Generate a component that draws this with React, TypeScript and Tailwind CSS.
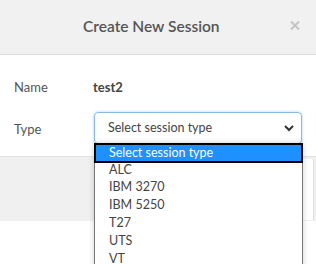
import React from "react";

export default function App() {
  const options = ["ALC", "IBM 3270", "IBM 5250", "T27", "UTS", "VT"];
  return (
    <div
      className="relative w-[316px] h-[264px] overflow-hidden bg-white"
      style={{ fontFamily: "Lato, 'Open Sans', sans-serif" }}
    >
      <div className="relative h-[55px] bg-[#f1f1f1] border-b border-[#dedede] flex items-center pl-[83px]">
        <span className="text-[15.5px] font-semibold text-[#555] mt-[-1px]">Create New Session</span>
        <svg
          className="absolute left-[290px] top-[21px]"
          width="10"
          height="9"
          viewBox="0 0 10 9"
        >
          <path d="M1 0.5 L9 8.5 M9 0.5 L1 8.5" stroke="#c4c4c4" strokeWidth="2" />
        </svg>
      </div>
      <div className="h-[101px] pl-[14px] pt-[24px]">
        <div className="flex items-center h-[18px]">
          <span className="w-[79px] text-[13px] text-[#555]">Name</span>
          <span className="text-[13px] font-bold text-[#444]">test2</span>
        </div>
        <div className="flex items-center mt-[15px]">
          <span className="w-[80px] text-[13px] text-[#555] mt-[4px]">Type</span>
          <div className="w-[208px] h-[32px] rounded-[4px] border border-[#8ab8e6] shadow-[0_0_3px_rgba(100,160,230,0.5)] flex items-center justify-between pl-[13px] pr-[7px]">
            <span className="text-[12.5px] text-[#444]">Select session type</span>
            <svg width="10" height="7" viewBox="0 0 10 7">
              <path d="M1 1 L5 5 L9 1" stroke="#333" strokeWidth="2" fill="none" />
            </svg>
          </div>
        </div>
      </div>
      <div className="h-[65px] bg-[#f0f0f0] border-t border-[#e2e2e2] flex justify-end pt-[2px] pr-[2px] pb-[1px]">
        <div className="w-[40px] bg-white border-r border-[#e0e0e0]" />
      </div>
      <div className="absolute left-[94px] top-[143px] w-[209px] h-[130px] bg-white border border-[#767676] shadow-[0_0_6px_rgba(0,0,0,0.18)]">
        <div className="h-[16px] bg-[#1e90ff] outline outline-2 outline-black mx-[1px] mt-[1px] flex items-center pl-[13px]">
          <span className="text-[12.5px] text-white leading-none">Select session type</span>
        </div>
        {options.map((o) => (
          <div key={o} className="h-[17.8px] flex items-center pl-[14px]">
            <span className="text-[12.5px] text-[#444] leading-none">{o}</span>
          </div>
        ))}
      </div>
    </div>
  );
}
